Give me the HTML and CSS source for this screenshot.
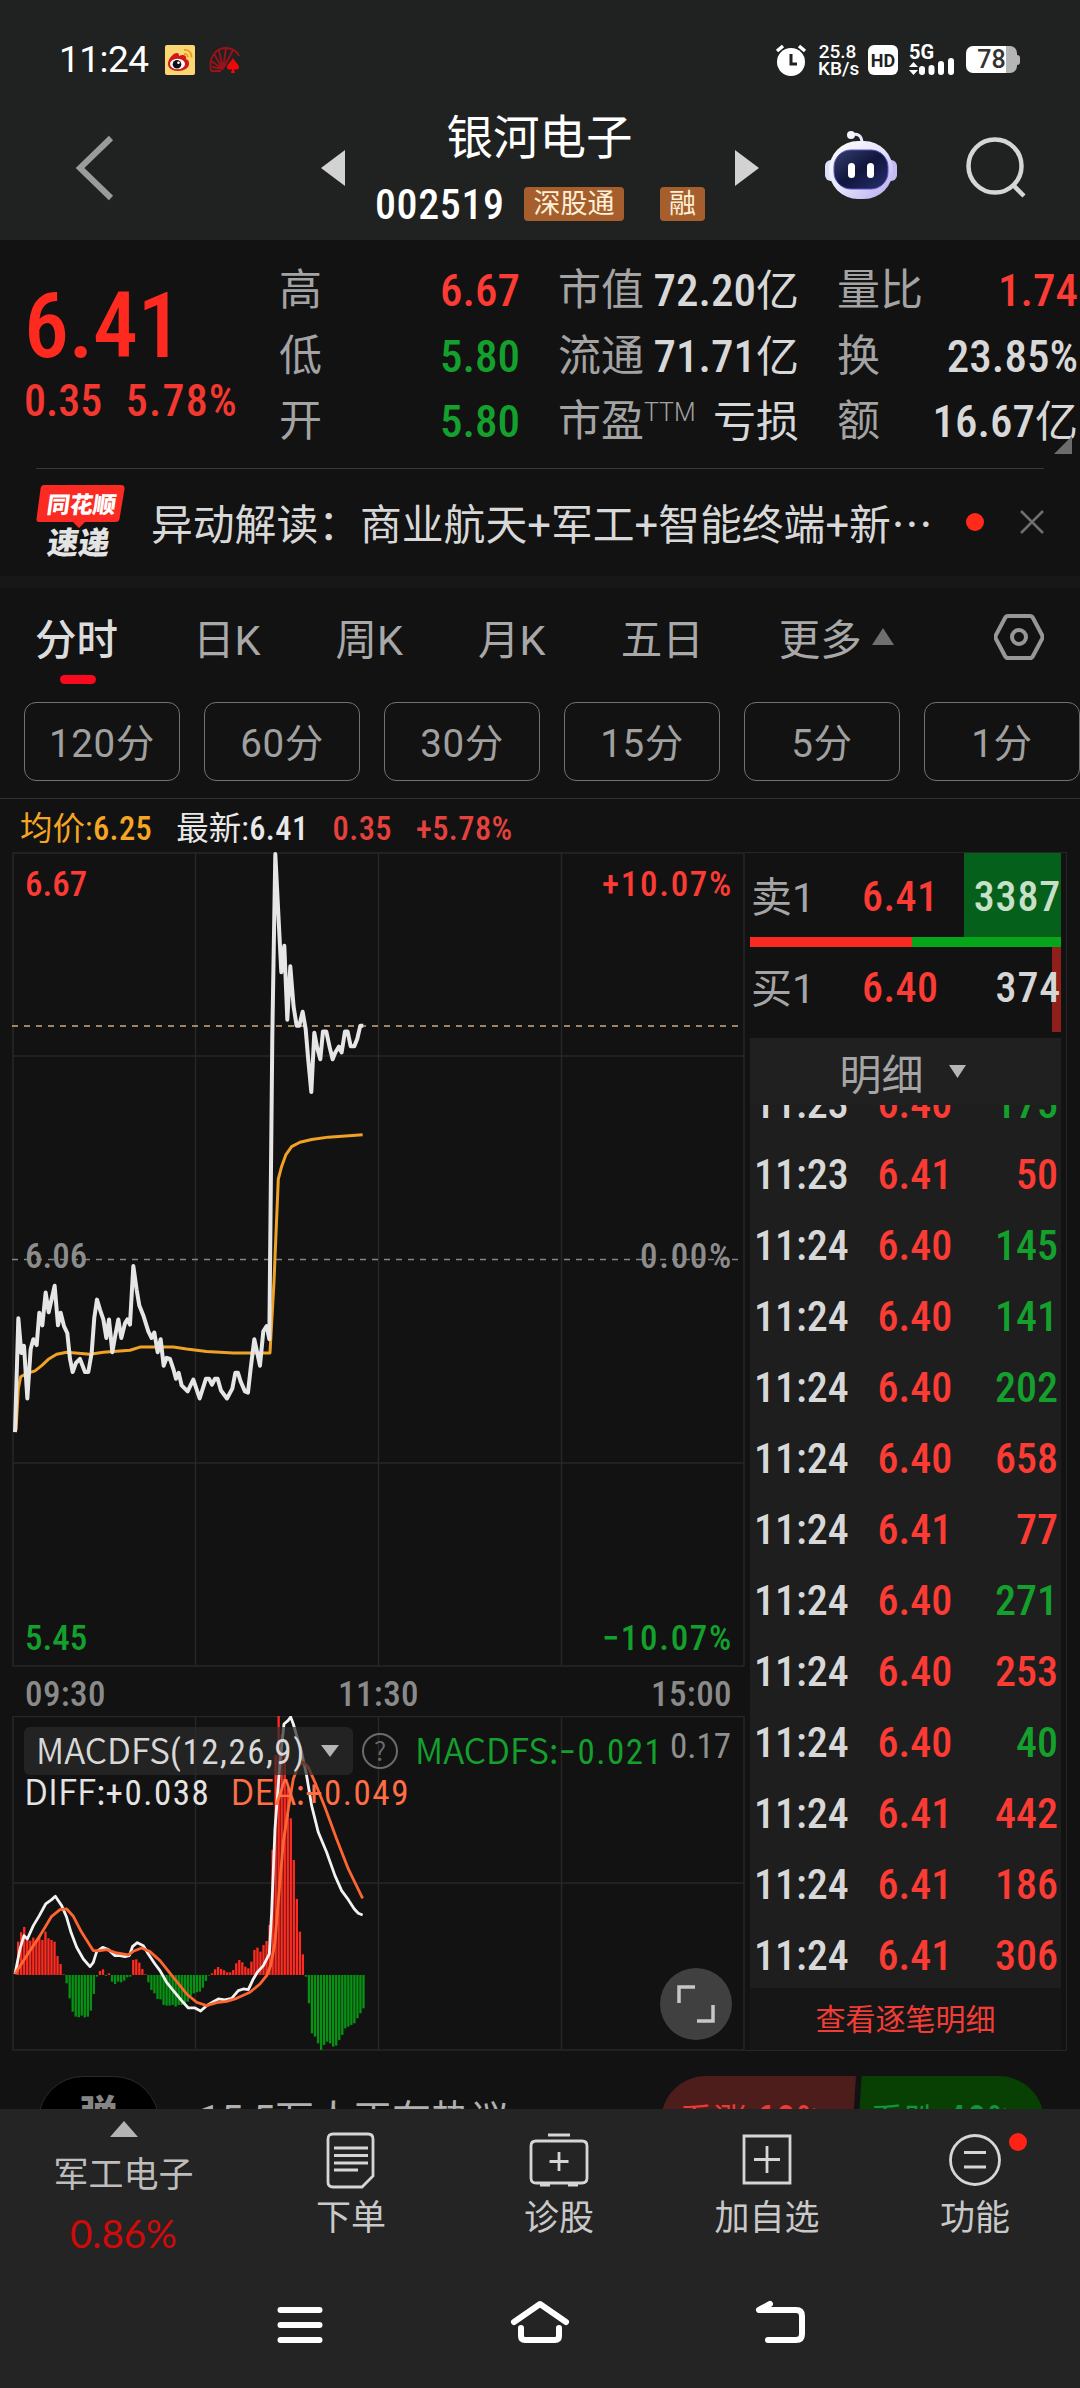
FILE: index.html
```html
<!DOCTYPE html>
<html lang="zh-CN">
<head>
  <meta charset="UTF-8">
  <title>银河电子 002519</title>
  <link rel="stylesheet" href="styles.css">
</head>
<body>

<div class="top">
  <div class="status">
    <span class="clock">11:24</span>
    <svg class="app-icon" width="30" height="30" viewBox="0 0 30 30">
      <rect width="30" height="30" rx="2" fill="#fbd774"/>
      <path d="M3 19c0-5 5-11 9-11 2 0 2 2 2 3 4-2 8-1 7 3 3 1 3 3 3 5 0 4-5 7-11 7S3 23 3 19z" fill="#d3181c"/>
      <ellipse cx="12.500" cy="19" rx="7.500" ry="5.300" fill="#fff"/>
      <circle cx="12" cy="19.300" r="4.300" fill="#111"/>
      <circle cx="13.500" cy="17.800" r="1.300" fill="#fff"/>
      <path d="M19 5c4-.6 8 2.500 7.500 7.500M19 9c2.500-.3 4 1 3.800 3.500" fill="none" stroke="#ef9a1c" stroke-width="1.800"/>
    </svg>
    <svg class="fan-icon" width="32" height="26" viewBox="0 0 32 26">
      <path d="M2 24C-1 10 8 1 16 1s12 3 14 8M14 22L2 14M14 22L5 7M14 22L10 3M14 22L17 1M15 20L24 3M2 24h10M14 22l-11-2" fill="none" stroke="#9c1218" stroke-width="1.800"/>
      <path d="M24 11c2 4 6 6 6 9 0 3-3 3-5 2l1 4h-4l1-4c-2 1-5 1-5-2 0-3 4-5 6-9z" fill="#f00808"/>
    </svg>
    <div class="status-right">
      <svg width="32" height="32" viewBox="0 0 32 32">
        <circle cx="16" cy="18" r="14" fill="#fff"/>
        <path d="M2 7l6-5M30 7l-6-5" stroke="#fff" stroke-width="3.500"/>
        <path d="M16 10v10h6" fill="none" stroke="#202221" stroke-width="3"/>
      </svg>
      <div class="speed">25.8<br>KB/s</div>
      <div class="hd">HD</div>
      <svg class="signal" width="46" height="32" viewBox="0 0 46 32">
        <text x="0" y="15" class="g5">5G</text>
        <path d="M0 23l4.500-5 4.500 5zM0 26h9l-4.500 5z" fill="#fff"/>
        <path d="M13 25v3M22.500 24v4M32 20v8M42 17v11" stroke="#fff" stroke-width="6" stroke-linecap="round"/>
      </svg>
      <div class="battery"><span>78</span></div>
    </div>
  </div>
  <div class="titlebar">
    <svg class="back" width="40" height="66" viewBox="0 0 40 66"><path d="M36 3L5 33l31 30" fill="none" stroke="#9b9b9b" stroke-width="6"/></svg>
    <svg class="prev" width="24" height="36" viewBox="0 0 24 36"><path d="M24 0v36L0 18z" fill="#d2d2d2"/></svg>
    <div class="name">
      <div class="stock-name">银河电子</div>
      <div class="code-row"><span class="num code">002519</span><span class="tag">深股通</span><span class="tag tag-rong">融</span></div>
    </div>
    <svg class="next" width="24" height="36" viewBox="0 0 24 36"><path d="M0 0v36l24-18z" fill="#d2d2d2"/></svg>
    <svg class="robot" width="72" height="70" viewBox="0 0 72 70">
      <defs>
        <linearGradient id="shell" x1="0" y1="0" x2="1" y2="1"><stop offset="0" stop-color="#fff"/><stop offset=".5" stop-color="#e6e4fb"/><stop offset="1" stop-color="#b4a6ee"/></linearGradient>
        <linearGradient id="face" x1="0" y1="0" x2="1" y2="1"><stop offset="0" stop-color="#35406f"/><stop offset=".5" stop-color="#10163c"/><stop offset="1" stop-color="#27306e"/></linearGradient>
      </defs>
      <path d="M26 5c6-2 11 0 11 8" fill="none" stroke="#e8e8ff" stroke-width="3"/>
      <circle cx="26" cy="5" r="4" fill="#f4f4ff"/>
      <rect x="0" y="30" width="12" height="21" rx="6" fill="#d9e2fb"/>
      <rect x="60" y="30" width="12" height="21" rx="6" fill="#c3bcf2"/>
      <rect x="4" y="11" width="64" height="58" rx="29" fill="url(#shell)"/>
      <rect x="9" y="20" width="54" height="39" rx="17" fill="url(#face)" stroke="#5b50c8"/>
      <rect x="23" y="33" width="7" height="15" rx="3.500" fill="#fff"/>
      <rect x="42" y="33" width="7" height="15" rx="3.500" fill="#fff"/>
    </svg>
    <svg class="search" width="62" height="62" viewBox="0 0 62 62"><circle cx="29" cy="29" r="26.500" fill="none" stroke="#d5d6d5" stroke-width="4.500"/><path d="M47 48l11 11" stroke="#d5d6d5" stroke-width="4.500"/></svg>
  </div>
</div>

<div class="quote">
  <div class="price-box">
    <div class="num last">6.41</div>
    <div class="num change"><span>0.35</span><span class="pct">5.78%</span></div>
  </div>
  <div class="stats">
    <div class="stat"><label>高</label><b class="num red">6.67</b></div>
    <div class="stat"><label>低</label><b class="num green">5.80</b></div>
    <div class="stat"><label>开</label><b class="num green">5.80</b></div>
  </div>
  <div class="stats">
    <div class="stat"><label>市值</label><b class="num">72.20<i>亿</i></b></div>
    <div class="stat"><label>流通</label><b class="num">71.71<i>亿</i></b></div>
    <div class="stat"><label>市盈<sup>TTM</sup></label><b class="num"><i>亏损</i></b></div>
  </div>
  <div class="stats">
    <div class="stat"><label>量比</label><b class="num red">1.74</b></div>
    <div class="stat"><label>换</label><b class="num">23.85%</b></div>
    <div class="stat"><label>额</label><b class="num">16.67<i>亿</i></b></div>
  </div>
  <div class="corner"></div>
</div>

<div class="news">
  <svg class="news-logo" width="90" height="74" viewBox="0 0 90 74">
    <path d="M8 0h77q4 0 3.500 4l-5 30q-.6 3-4 3H49l-6 6-6-6H3q-3 0-2.500-3l4-30Q5 0 8 0z" fill="#fb2a22"/>
    <text x="14" y="28" class="logo-top" transform="skewX(-8)">同花顺</text>
    <text x="20" y="69" class="logo-bottom" transform="skewX(-8)">速递</text>
  </svg>
  <span class="news-text">异动解读：商业航天+军工+智能终端+新<span class="dots">…</span></span>
  <span class="dot"></span>
  <svg width="24" height="24" viewBox="0 0 24 24"><path d="M1 1l22 22M23 1L1 23" stroke="#6e6e6e" stroke-width="2.500"/></svg>
</div>

<div class="tabs">
  <span class="tab active">分时</span>
  <span class="tab">日K</span>
  <span class="tab">周K</span>
  <span class="tab">月K</span>
  <span class="tab">五日</span>
  <span class="tab more">更多<svg width="24" height="19" viewBox="0 0 24 19"><path d="M12 1l11 17H1z" fill="#6f6f6f"/></svg></span>
  <svg class="gear" width="50" height="48" viewBox="0 0 50 48"><path d="M14 3h22q2 0 3 2l9 17q1 2 0 4l-9 17q-1 2-3 2H14q-2 0-3-2L2 26q-1-2 0-4l9-17q1-2 3-2z" fill="none" stroke="#979797" stroke-width="4"/><circle cx="25" cy="24" r="7" fill="none" stroke="#979797" stroke-width="4"/></svg>
</div>

<div class="periods">
  <span>120分</span><span>60分</span><span>30分</span><span>15分</span><span>5分</span><span>1分</span>
</div>

<div class="legend">
  <span class="avg">均价:<b>6.25</b></span>
  <span class="now">最新:<b>6.41</b></span>
  <span class="lr"><b>0.35</b></span>
  <span class="lr"><b>+5.78%</b></span>
</div>

<div class="main">
  <div class="charts">
    <div class="chart price-chart">
      <svg width="733" height="816" viewBox="12 853 733 816">
        <path class="grid" d="M13 854H744V1667H13zM195.500 854V1667M378.500 854V1667M561.500 854V1667M13 1057H744M13 1464H744"/>
        <path d="M12 1027H740" class="dash" stroke="#c9ad7c"/>
        <path d="M12 1260.500H740" class="dash" stroke="#858585"/>
        <g transform="translate(0 840) scale(.3333 .3954)">
          <polyline class="avg-line" points="48,1495 55,1390 62,1360 80,1352 105,1345 125,1332 145,1316 170,1303 200,1298 270,1303 310,1298 390,1293 420,1285 520,1285 560,1290 620,1296 700,1300 810,1300 822,1120 835,860 845,828 858,798 875,778 900,767 935,760 985,754 1088,748"/>
          <polyline class="price-line" points="45,1500 55,1212 64,1300 72,1282 82,1415 92,1290 100,1265 110,1280 118,1198 127,1230 137,1147 146,1197 164,1130 174,1230 182,1198 192,1232 202,1250 210,1315 218,1348 228,1325 240,1315 255,1348 265,1348 275,1300 283,1210 291,1165 300,1190 310,1215 319,1262 327,1215 337,1298 346,1255 355,1215 364,1262 375,1225 382,1215 390,1228 400,1080 410,1140 418,1180 430,1205 445,1245 455,1262 463,1248 473,1298 482,1265 491,1332 500,1312 510,1315 520,1340 528,1365 536,1350 545,1382 563,1397 580,1367 599,1415 618,1365 627,1365 636,1380 645,1365 653,1365 663,1395 681,1415 697,1390 706,1350 714,1350 722,1372 735,1397 744,1400 752,1340 763,1265 780,1332 790,1245 800,1232 808,1265 817,500 826,38 844,337 853,270 862,457 871,322 881,425 890,472 898,472 908,437 917,480 925,560 934,640 943,490 952,530 961,557 969,487 979,487 990,530 998,557 1006,540 1017,525 1025,540 1035,487 1043,487 1052,524 1063,524 1072,505 1081,472 1090,472"/>
        </g>
      </svg>
      <span class="num lab l-top red">6.67</span>
      <span class="num lab r-top red">+10.07%</span>
      <span class="num lab l-mid">6.06</span>
      <span class="num lab r-mid">0.00%</span>
      <span class="num lab l-bot green">5.45</span>
      <span class="num lab r-bot green">−10.07%</span>
    </div>
    <div class="times num"><span>09:30</span><span>11:30</span><span>15:00</span></div>
    <div class="chart macd-chart">
      <svg width="733" height="336" viewBox="12 1717 733 336">
        <path class="grid" d="M13 1717.500H744V2051H13zM195.500 1717V2051M378.500 1717V2051M561.500 1717V2051M13 1884H744"/>
        <g transform="translate(0 1630) scale(.3333)">
          <g id="bars"></g>
          <polyline class="diff-line" points="45,1035 60,960 72,920 82,930 100,890 118,860 137,825 155,812 166,802 185,830 200,865 213,910 230,955 250,990 270,1013 280,1000 290,968 308,955 325,962 345,980 360,980 375,983 388,980 398,952 412,941 430,950 445,975 465,1005 480,1025 500,1060 520,1085 545,1115 565,1137 585,1137 602,1146 620,1130 640,1118 655,1110 675,1113 695,1108 715,1085 730,1080 745,1082 760,1050 772,1030 790,1010 808,975 815,850 825,600 840,400 852,285 864,275 872,264 880,285 893,330 905,370 920,440 935,530 955,610 980,670 1005,740 1025,785 1045,812 1063,840 1075,853 1088,858"/>
          <polyline class="dea-line" points="45,1035 80,980 120,920 155,862 180,842 200,840 220,862 245,910 280,965 300,965 320,962 350,972 385,978 400,967 425,957 450,968 480,995 520,1045 560,1095 590,1120 620,1130 650,1121 680,1117 710,1108 750,1090 780,1065 800,1040 812,1010 825,940 838,780 850,640 865,540 880,450 895,410 910,400 925,415 945,460 975,535 1010,630 1045,720 1088,808"/>
        </g>
      </svg>
      <div class="macd-head">
        <span class="macd-btn"><span>MACDFS<b>(12,26,9)</b></span><svg width="18" height="12" viewBox="0 0 18 12"><path d="M0 0h18L9 12z" fill="#b5b5b5"/></svg></span>
        <span class="help">?</span>
        <span class="green macd-val">MACDFS:<b>−0.021</b></span>
        <span class="num macd-max">0.17</span>
      </div>
      <div class="macd-sub"><span>DIFF:<b>+0.038</b></span><span class="dea">DEA:<b>+0.049</b></span></div>
      <span class="expand"><svg width="38" height="38" viewBox="0 0 38 38"><path d="M18 2H2v16M36 20v16H20" fill="none" stroke="#c6c6c6" stroke-width="3.500"/></svg></span>
    </div>
  </div>

  <div class="book">
    <div class="order sell"><label>卖1</label><b class="num red">6.41</b><em class="num">3387</em></div>
    <div class="ratio"><i></i></div>
    <div class="order buy"><label>买1</label><b class="num red">6.40</b><em class="num">374</em></div>
    <div class="detail-head">明细<svg width="17" height="13" viewBox="0 0 17 13"><path d="M0 0h17L8.500 13z" fill="#b5b5b5"/></svg></div>
    <div class="ticks num">
      <div class="tick"><span>11:23</span><span class="red">6.40</span><span class="green">175</span></div>
      <div class="tick"><span>11:23</span><span class="red">6.41</span><span class="red">50</span></div>
      <div class="tick"><span>11:24</span><span class="red">6.40</span><span class="green">145</span></div>
      <div class="tick"><span>11:24</span><span class="red">6.40</span><span class="green">141</span></div>
      <div class="tick"><span>11:24</span><span class="red">6.40</span><span class="green">202</span></div>
      <div class="tick"><span>11:24</span><span class="red">6.40</span><span class="red">658</span></div>
      <div class="tick"><span>11:24</span><span class="red">6.41</span><span class="red">77</span></div>
      <div class="tick"><span>11:24</span><span class="red">6.40</span><span class="green">271</span></div>
      <div class="tick"><span>11:24</span><span class="red">6.40</span><span class="red">253</span></div>
      <div class="tick"><span>11:24</span><span class="red">6.40</span><span class="green">40</span></div>
      <div class="tick"><span>11:24</span><span class="red">6.41</span><span class="red">442</span></div>
      <div class="tick"><span>11:24</span><span class="red">6.41</span><span class="red">186</span></div>
      <div class="tick"><span>11:24</span><span class="red">6.41</span><span class="red">306</span></div>
    </div>
    <div class="all-ticks">查看逐笔明细</div>
  </div>
</div>

<div class="poll">
  <span class="danmu">弹</span>
  <span class="hot">15.5万人正在热议</span>
  <span class="vote up">看涨 <b>60%</b></span>
  <span class="vote down">看跌 <b>40%</b></span>
</div>

<div class="toolbar">
  <div class="sector">
    <svg width="28" height="16" viewBox="0 0 28 16"><path d="M14 0l14 16H0z" fill="#b4b4b4"/></svg>
    <div class="sector-name">军工电子</div>
    <div class="sector-pct">0.86%</div>
  </div>
  <div class="tool">
    <svg width="60" height="58" viewBox="0 0 60 58"><path d="M12 3h35q5 0 5 5v37L41 56H12q-5 0-5-5V8q0-5 5-5z"/><path d="M13 17h34M13 24.500h34M13 32h34M13 39h24"/></svg>
    <span>下单</span>
  </div>
  <div class="tool">
    <svg width="60" height="58" viewBox="0 0 60 58"><path d="M7 10h46q5 0 5 5v32q0 5-5 5H7q-5 0-5-5V15q0-5 5-5zM19 4h22M30 21v19M20.500 30.500h19M11 54h10M39 54h10"/></svg>
    <span>诊股</span>
  </div>
  <div class="tool">
    <svg width="60" height="58" viewBox="0 0 60 58"><path d="M7 5h46v47H7zM30 15v27M17 28.500h26"/></svg>
    <span>加自选</span>
  </div>
  <div class="tool">
    <svg width="60" height="58" viewBox="0 0 60 58"><circle cx="30" cy="29" r="24.500"/><path d="M19 21.500h22M19 36h22"/></svg>
    <span>功能</span>
    <i class="badge"></i>
  </div>
</div>

<div class="sysnav">
  <svg width="60" height="50" viewBox="0 0 60 50"><path d="M10.500 10h39M10.500 25h39M10.500 40h39"/></svg>
  <svg width="60" height="50" viewBox="0 0 60 50"><path d="M4 22L30 4l26 18M11 28v8q0 4 4 4h30q4 0 4-4v-8"/></svg>
  <svg width="60" height="50" viewBox="0 0 60 50"><path d="M20 4L9 10h37q6 0 6 6v18q0 6-6 6H18"/></svg>
</div>

<script>
// MACD histogram, one bar per minute, in chart units above / below zero
const macd = [
  100,128,144,110,103,112,105,112,105,130,110,105,100,57,33,2,
  -25,-70,-110,-125,-127,-122,-127,-125,-107,-57,-5,12,17,-3,5,
  -20,-27,-20,-22,-17,-7,-5,45,47,37,18,2,
  -22,-45,-55,-72,-73,-90,-92,-92,-90,-95,-90,-90,-87,-80,-62,-55,-52,-50,-38,-18,-2,
  5,17,24,18,14,8,8,15,35,45,38,25,20,40,75,82,70,90,102,150,
  375,660,777,720,660,560,470,345,228,130,62,
  -5,-85,-175,-185,-205,-225,-210,-200,-205,-215,-212,-195,-180,-160,-155,-150,-145,-130,-115,-100
];
const zero = 1038;
const step = 1036 / (macd.length - 1);
document.getElementById('bars').innerHTML = macd.map((v, i) =>
  `<rect x="${(51 + i * step).toFixed(1)}" y="${v > 0 ? zero - v : zero}" width="7" height="${Math.abs(v)}" fill="${v > 0 ? '#ff2a20' : '#079214'}"/>`
).join('');
</script>

</body>
</html>
```
FILE: styles.css
```css
* {
  box-sizing: border-box;
}
body {
  margin: 0;
  width: 1080px;
  height: 2388px;
  overflow: hidden;
  background: #121212;
  color: #d8d8d8;
  font-family: Roboto, "Noto Sans CJK SC", sans-serif;
}
svg {
  display: block;
  flex: none;
}
b, i, em {
  font-style: normal;
  font-weight: 450;
}
.num, b {
  font-weight: 460;
  font-stretch: 86%;
}
.red {
  color: #fb3b34;
}
.green {
  color: #14a02c;
}

/* header */
.top {
  height: 240px;
  background: #202221;
}
.status {
  height: 84px;
  padding: 35px 63px 0 59px;
  display: flex;
  align-items: center;
}
.clock {
  font-size: 37px;
  letter-spacing: -.5px;
  color: #fff;
  width: 106px;
}
.fan-icon {
  margin-left: 14px;
}
.status-right {
  margin-left: auto;
  display: flex;
  align-items: center;
  gap: 11px;
}
.speed {
  width: 39px;
  font-size: 19px;
  font-weight: 500;
  line-height: 17px;
  color: #fff;
  text-align: center;
  white-space: nowrap;
}
.hd {
  width: 30px;
  height: 30px;
  border-radius: 6px;
  background: #fff;
  color: #202221;
  font-size: 18px;
  font-weight: 700;
  line-height: 31px;
  text-align: center;
}
.g5 {
  font-size: 20px;
  font-weight: 700;
  fill: #fff;
}
.battery {
  position: relative;
  width: 51px;
  height: 27px;
  border-radius: 7px;
  background: linear-gradient(90deg, #fff 78%, #b5b5b5 78%);
  color: #333;
  font-size: 25px;
  font-weight: 500;
  line-height: 28px;
  text-align: center;
}
.battery::after {
  content: "";
  position: absolute;
  right: -3px;
  top: 9px;
  width: 4px;
  height: 10px;
  border-radius: 0 3px 3px 0;
  background: #b5b5b5;
}
.titlebar {
  display: flex;
  height: 156px;
  padding-left: 75px;
}
.back {
  margin-top: 51px;
}
.prev {
  margin: 66px 0 0 206px;
}
.name {
  width: 390px;
  display: flex;
  flex-direction: column;
}
.stock-name {
  height: 58px;
  margin: 25px 0 0 -1px;
  line-height: 58px;
  font-size: 46.500px;
  color: #fff;
  text-align: center;
}
.code-row {
  display: flex;
  align-items: center;
  height: 34px;
  margin-top: 20px;
  padding-left: 30px;
}
.code {
  width: 149px;
  font-size: 42px;
  font-weight: 500;
  letter-spacing: .6px;
  color: #fff;
}
.tag {
  width: 100px;
  height: 34px;
  border-radius: 4px;
  background: #a65f2c;
  color: #fdf0d8;
  font-size: 27px;
  line-height: 35px;
  text-align: center;
}
.tag-rong {
  width: 45px;
  margin-left: 36px;
}
.next {
  margin-top: 66px;
}
.robot {
  margin: 46px 0 0 66px;
}
.search {
  margin: 53px 0 0 69px;
}

/* quote */
.quote {
  position: relative;
  display: grid;
  grid-template-columns: 217px 241px 241px 241px;
  column-gap: 38px;
  height: 229px;
  padding-left: 24px;
}
.quote::after {
  content: "";
  position: absolute;
  left: 36px;
  right: 36px;
  bottom: 0;
  height: 1px;
  background: #383838;
}
.price-box {
  color: #ff2a1f;
}
.last {
  height: 104px;
  margin-top: 35px;
  font-size: 90px;
  line-height: 104px;
  letter-spacing: -.5px;
}
.change {
  display: flex;
  justify-content: space-between;
  width: 214px;
  margin-top: -2px;
  font-size: 44px;
  line-height: 48px;
  color: #f4372f;
}
.change .pct {
  letter-spacing: 1.200px;
}
.stats {
  padding-top: 18px;
}
.stat {
  display: flex;
  justify-content: space-between;
  height: 65.500px;
  line-height: 65.500px;
  font-size: 43px;
  white-space: nowrap;
}
.stat label {
  color: #a3a3a3;
}
.stat i {
  font-weight: 400;
}
.stat b {
  font-size: 45px;
}
.stat b i {
  font-size: 43px;
}
.stat sup {
  font-size: 25px;
  font-weight: 300;
  line-height: 0;
  vertical-align: 15px;
}
.corner {
  position: absolute;
  right: 8px;
  top: 196px;
  border-left: 18px solid transparent;
  border-bottom: 18px solid #6c6c6c;
}

/* news strip */
.news {
  display: flex;
  align-items: center;
  height: 119px;
  padding: 0 36px 2px;
  border-bottom: 12px solid #171717;
}
.logo-top {
  font-size: 23px;
  font-weight: 900;
  fill: #fff;
}
.logo-bottom {
  font-size: 31px;
  font-weight: 900;
  fill: #e4e4e4;
}
.news-text {
  width: 815px;
  margin-left: 25px;
  font-size: 41.800px;
  white-space: nowrap;
}
.dots {
  font-family: "Noto Sans CJK SC", sans-serif;
  line-height: 1;
}
.dot {
  width: 18px;
  height: 18px;
  margin-right: 36px;
  border-radius: 50%;
  background: #ff2a1a;
}

/* chart tabs */
.tabs {
  position: relative;
  display: flex;
  align-items: center;
  height: 114px;
  padding: 0 0 17px 35px;
  font-size: 41.500px;
  color: #a8a8a8;
}
.tab {
  position: relative;
  margin-right: 75px;
}
.active {
  color: #dcdcdc;
  font-weight: 500;
}
.active::after {
  content: "";
  position: absolute;
  left: 25px;
  bottom: -17px;
  width: 36px;
  height: 9px;
  border-radius: 5px;
  background: #f8091d;
}
.more {
  display: flex;
  align-items: center;
  gap: 9px;
}
.gear {
  margin-left: auto;
  margin-right: 36px;
}
.periods {
  display: flex;
  gap: 24px;
  width: 1092px;
  height: 97px;
  padding-left: 24px;
  border-bottom: 1px solid #333;
}
.periods span {
  flex: none;
  width: 156px;
  height: 79px;
  border: 1px solid #727272;
  border-radius: 12px;
  color: #a0a0a0;
  font-size: 38.500px;
  letter-spacing: .6px;
  line-height: 82px;
  text-align: center;
}
.legend {
  display: flex;
  gap: 24px;
  height: 53px;
  padding-left: 20px;
  font-size: 32.500px;
  line-height: 60px;
}
.legend b {
  letter-spacing: .4px;
}
.avg {
  color: #f5a623;
}
.now {
  color: #e8e8e8;
}
.lr {
  color: #e5423e;
}

/* charts */
.main {
  display: flex;
  height: 1200px;
  padding-left: 12px;
}
.charts {
  width: 733px;
}
.chart {
  position: relative;
}
.price-chart {
  height: 816px;
}
.grid {
  fill: none;
  stroke: #272727;
  stroke-width: 1.500;
}
.dash {
  stroke-width: 1.500;
  stroke-dasharray: 6 6;
}
.price-line, .avg-line, .diff-line, .dea-line {
  fill: none;
  vector-effect: non-scaling-stroke;
  stroke-linejoin: round;
}
.price-line {
  stroke: #e6e6e6;
  stroke-width: 4;
}
.avg-line {
  stroke: #f0a226;
  stroke-width: 3;
}
.diff-line {
  stroke: #f2f2f2;
  stroke-width: 2.800;
}
.dea-line {
  stroke: #ff6530;
  stroke-width: 2.800;
}
.lab {
  position: absolute;
  font-size: 35px;
  line-height: 40px;
}
.l-top, .l-mid, .l-bot {
  left: 13px;
}
.r-top, .r-mid, .r-bot {
  right: 12px;
  letter-spacing: 1.700px;
}
.l-top, .r-top {
  top: 13px;
}
.l-mid, .r-mid {
  top: 385px;
  color: #8c8c8c;
}
.l-bot, .r-bot {
  top: 767px;
}
.times {
  display: flex;
  justify-content: space-between;
  height: 48px;
  padding: 2px 13px 0;
  font-size: 35px;
  letter-spacing: .4px;
  line-height: 50px;
  color: #8a8a8a;
}
.macd-chart {
  height: 336px;
}
.macd-head {
  position: absolute;
  left: 12px;
  top: 11px;
  display: flex;
  align-items: center;
  width: 707px;
  height: 48px;
  font-size: 35px;
  line-height: 48px;
}
.macd-head, .macd-sub {
  font-family: "Noto Sans CJK SC", sans-serif;
  font-weight: 350;
}
.macd-head b, .macd-sub b, .macd-max {
  font-family: Roboto, sans-serif;
  font-weight: 430;
  letter-spacing: 1.500px;
}
.macd-btn {
  display: flex;
  align-items: center;
  justify-content: space-between;
  width: 329px;
  height: 48px;
  padding: 0 14px 0 12px;
  border-radius: 6px;
  background: rgba(43, 43, 43, .7);
  white-space: nowrap;
}
.help {
  width: 36px;
  height: 36px;
  margin-left: 9px;
  border: 2.500px solid #6b6b6b;
  border-radius: 50%;
  color: #6b6b6b;
  font-size: 26px;
  line-height: 30px;
  text-align: center;
}
.macd-val {
  margin-left: 17px;
  white-space: nowrap;
}
.macd-head .macd-max {
  margin: -8px 0 0 auto;
  letter-spacing: 0;
  color: #8f8f8f;
}
.macd-sub {
  position: absolute;
  left: 12px;
  top: 53px;
  display: flex;
  gap: 20px;
  color: #e4e4e4;
  font-size: 35px;
  line-height: 42px;
}
.dea {
  color: #ff6e45;
}
.expand {
  position: absolute;
  right: 13px;
  top: 252px;
  width: 72px;
  height: 72px;
  padding: 17px;
  border-radius: 50%;
  background: #404040;
}

/* order book */
.book {
  width: 322px;
  height: 1199px;
  padding: 0 5px;
  border: 1px solid #262626;
  border-left: 0;
}
.order {
  display: flex;
  align-items: center;
  height: 84px;
  padding-left: 1px;
  font-size: 41px;
}
.order label {
  width: 111px;
  margin-top: -3px;
  color: #a5a5a5;
}
.order b, .order em {
  font-size: 42px;
  margin-top: 2px;
  letter-spacing: .4px;
}
.order em {
  margin-left: auto;
  font-weight: 500;
  letter-spacing: .8px;
  color: #d6d6d6;
}
.sell {
  background: linear-gradient(90deg, transparent 214px, #04601a 214px);
}
.order.sell em {
  color: #c8e0c8;
}
.ratio {
  height: 10px;
  background: #06a51a;
}
.ratio i {
  display: block;
  width: 52%;
  height: 10px;
  background: #fb2a20;
}
.buy {
  height: 85px;
  margin-bottom: 6px;
  padding-bottom: 7px;
  background: linear-gradient(90deg, transparent 302px, #8e1f1a 302px);
}
.detail-head {
  display: flex;
  align-items: center;
  justify-content: center;
  gap: 25px;
  height: 67px;
  padding-right: 6px;
  background: #202020;
  color: #a5a5a5;
  font-size: 42px;
}
.ticks {
  height: 883px;
  overflow: hidden;
  background: #1e1e1e;
  font-size: 42px;
}
.tick {
  display: grid;
  grid-template-columns: 123.500px 100px 1fr;
  height: 71px;
  padding: 0 3px 0 4px;
  line-height: 71px;
}
.tick:first-child {
  margin-top: -37.500px;
}
.tick span:last-child {
  text-align: right;
}
.all-ticks {
  height: 62px;
  background: #161616;
  color: #f23d37;
  font-size: 30px;
  line-height: 63px;
  text-align: center;
}

/* poll strip, half hidden by the toolbar */
.poll {
  display: flex;
  height: 57px;
  padding: 24px 36px 0 38px;
  overflow: hidden;
}
.danmu {
  flex: none;
  width: 121px;
  height: 90px;
  border: 1px solid #2a2a2a;
  border-radius: 45px;
  background: #000;
  color: #858585;
  font-size: 38px;
  font-weight: 900;
  line-height: 74px;
  text-align: center;
}
.hot {
  width: 462px;
  height: 89px;
  margin-left: 40px;
  font-size: 39px;
  line-height: 89px;
  color: #b0b0b0;
}
.vote {
  flex: none;
  width: 195px;
  height: 90px;
  padding-left: 18px;
  background: #4c1d1b;
  color: #ee3a35;
  font-size: 34px;
  line-height: 88px;
  white-space: nowrap;
}
.vote b {
  font-size: 39px;
  letter-spacing: 1px;
}
.up {
  border-radius: 45px 0 0 45px;
  clip-path: polygon(0 0, 100% 0, 97% 100%, 0 100%);
}
.down {
  width: 188px;
  padding-left: 14px;
  border-radius: 0 45px 45px 0;
  background: #083f02;
  color: #0f9440;
  clip-path: polygon(3% 0, 100% 0, 100% 100%, 0 100%);
}

/* bottom bars */
.toolbar {
  display: flex;
  height: 171px;
  background: #242424;
  color: #c9c9c9;
  font-size: 35px;
}
.sector {
  width: 247px;
  display: flex;
  flex-direction: column;
  align-items: center;
  padding-top: 12px;
}
.sector-name {
  margin-top: 14px;
  line-height: 50px;
  color: #bdbdbd;
}
.sector-pct {
  margin-top: 8px;
  color: #cf0a0a;
  font-family: Lato, sans-serif;
  font-size: 38.500px;
  line-height: 48px;
}
.tool {
  position: relative;
  width: 208px;
  display: flex;
  flex-direction: column;
  align-items: center;
  padding-top: 22px;
}
.tool svg {
  fill: none;
  stroke: #d6d6d6;
  stroke-width: 2.800;
}
.tool span {
  margin-top: 5px;
  line-height: 50px;
}
.badge {
  position: absolute;
  left: 138px;
  top: 24px;
  width: 18px;
  height: 18px;
  border-radius: 50%;
  background: #ff2217;
}
.sysnav {
  display: flex;
  justify-content: center;
  gap: 180px;
  height: 108px;
  padding-top: 20px;
  background: #242424;
}
.sysnav svg {
  fill: none;
  stroke: #fff;
  stroke-width: 6;
  stroke-linecap: round;
  stroke-linejoin: round;
}
```
